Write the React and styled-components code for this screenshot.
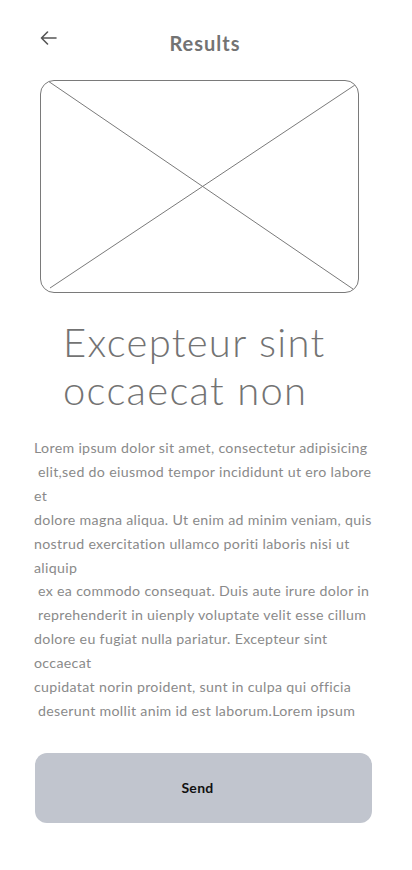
import React from "react";
import styled, { createGlobalStyle } from "styled-components";

const Global = createGlobalStyle`
  html, body { margin: 0; padding: 0; background: #fff; }
  body { font-family: Lato, "Open Sans", sans-serif; }
`;

const Page = styled.div`
  width: 412px;
  min-height: 870px;
  box-sizing: border-box;
  display: flex;
  flex-direction: column;
`;

const Header = styled.header`
  display: grid;
  grid-template-columns: 60px 1fr 60px;
  align-items: start;
  height: 80px;
`;

const Back = styled.button`
  border: 0;
  background: none;
  padding: 0;
  margin: 31px 0 0 40px;
  width: 17px;
  height: 14px;
  display: flex;
  align-items: center;
  justify-content: center;
  color: #555;
`;

const Title = styled.h1`
  margin: 31px 0 0 -2px;
  text-align: center;
  font-family: Lato, sans-serif;
  font-weight: 700;
  font-size: 20px;
  line-height: 24px;
  letter-spacing: 1px;
  color: #737373;
`;

const Placeholder = styled.div`
  margin: 0 0 0 40px;
  width: 319px;
  height: 213px;
  box-sizing: border-box;
  border: 1px solid #7a7a7a;
  border-radius: 14px;
  overflow: hidden;
  svg { display: block; }
`;

const Heading = styled.h2`
  margin: 25px 0 0 63px;
  font-family: Lato, sans-serif;
  font-weight: 300;
  font-size: 40px;
  line-height: 48px;
  color: #737373;
  letter-spacing: 1.3px;
`;

const Body = styled.p`
  margin: 22px 0 0 34px;
  font-family: Lato, sans-serif;
  font-size: 14.2px;
  line-height: 23.9px;
  letter-spacing: 0.32px;
  color: #8a8a8a;
  white-space: pre;
`;

const SendButton = styled.button`
  margin: 30px 0 0 35px;
  width: 337px;
  height: 70px;
  padding: 0 12px 0 0;
  border: 0;
  border-radius: 12px;
  background: #c1c5ce;
  font-family: Lato, sans-serif;
  font-weight: 700;
  font-size: 14px;
  letter-spacing: 0.3px;
  color: #111;
`;

const text = `Lorem ipsum dolor sit amet, consectetur adipisicing
 elit,sed do eiusmod tempor incididunt ut ero labore
et
dolore magna aliqua. Ut enim ad minim veniam, quis
nostrud exercitation ullamco poriti laboris nisi ut
aliquip
 ex ea commodo consequat. Duis aute irure dolor in
 reprehenderit in uienply voluptate velit esse cillum
dolore eu fugiat nulla pariatur. Excepteur sint
occaecat
cupidatat norin proident, sunt in culpa qui officia
 deserunt mollit anim id est laborum.Lorem ipsum`;

export default function App() {
  return (
    <Page>
      <Global />
      <Header>
        <Back aria-label="Back">
          <svg width="17" height="14" viewBox="0 0 17 14" fill="none" stroke="#555" strokeWidth="1.6" strokeLinecap="round" strokeLinejoin="round">
            <path d="M16 7H1.5M7.5 1L1.5 7l6 6" />
          </svg>
        </Back>
        <Title>Results</Title>
        <span />
      </Header>
      <Placeholder>
        <svg width="317" height="211" viewBox="0 0 317 211">
          <line x1="7" y1="0" x2="312" y2="208" stroke="#7a7a7a" strokeWidth="1" />
          <line x1="9" y1="207" x2="314" y2="4" stroke="#7a7a7a" strokeWidth="1" />
        </svg>
      </Placeholder>
      <Heading>Excepteur sint<br />occaecat non</Heading>
      <Body>{text}</Body>
      <SendButton>Send</SendButton>
    </Page>
  );
}
